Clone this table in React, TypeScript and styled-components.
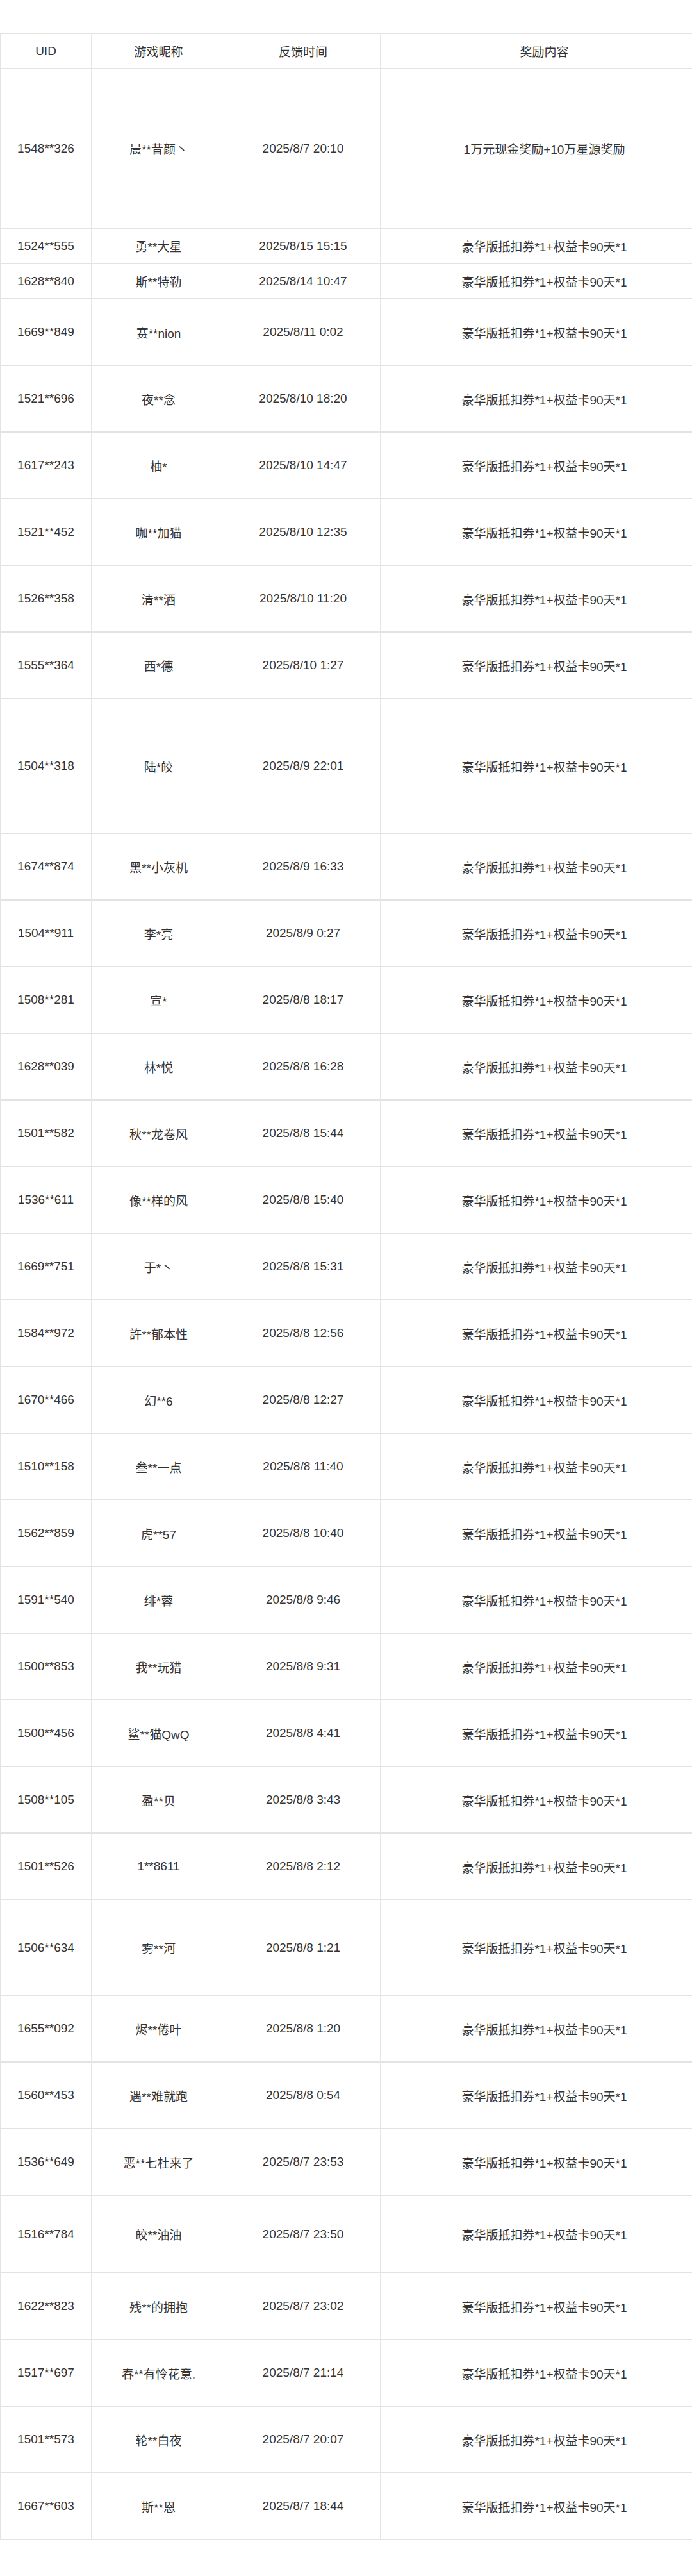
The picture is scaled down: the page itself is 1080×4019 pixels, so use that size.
import React from "react";
import styled, { createGlobalStyle } from "styled-components";

const GlobalStyle = createGlobalStyle`
  html, body {
    margin: 0;
    padding: 0;
    background: #ffffff;
  }
`;

const Page = styled.div`
  padding-top: 51px;
  padding-bottom: 57px;
`;

const RewardTable = styled.table`
  border-collapse: separate;
  border-spacing: 0;
  table-layout: fixed;
  width: 1106px;
  border-top: 2px solid #e3e3e3;
  border-left: 1px solid #e3e3e3;
  font-family: "Liberation Sans", "Noto Sans CJK SC", sans-serif;
  font-size: 19px;
  color: #333333;
`;

const Col = styled.col<{ $w: number }>`
  width: ${(p) => p.$w}px;
`;

const Row = styled.tr<{ $h: number }>`
  & > td,
  & > th {
    height: ${(p) => p.$h}px;
  }
`;

const HeadCell = styled.th`
  box-sizing: border-box;
  padding: 0 4px;
  font-weight: normal;
  text-align: center;
  vertical-align: middle;
  border-right: 1px solid #e6e6e6;
  border-bottom: 2px solid #e3e3e3;
  white-space: nowrap;
`;

const Cell = styled.td`
  box-sizing: border-box;
  padding: 0 4px;
  text-align: center;
  vertical-align: middle;
  border-right: 1px solid #e6e6e6;
  border-bottom: 2px solid #e3e3e3;
  white-space: nowrap;
`;

type Entry = {
  uid: string;
  name: string;
  time: string;
  reward?: string;
  h?: number;
};

const NORMAL = "豪华版抵扣券*1+权益卡90天*1";

const rows: Entry[] = [
  { uid: "1548**326", name: "晨**昔颜丶", time: "2025/8/7 20:10", reward: "1万元现金奖励+10万星源奖励", h: 249 },
  { uid: "1524**555", name: "勇**大星", time: "2025/8/15 15:15", h: 55 },
  { uid: "1628**840", name: "斯**特勒", time: "2025/8/14 10:47", h: 55 },
  { uid: "1669**849", name: "赛**nion", time: "2025/8/11 0:02" },
  { uid: "1521**696", name: "夜**念", time: "2025/8/10 18:20" },
  { uid: "1617**243", name: "柚*", time: "2025/8/10 14:47" },
  { uid: "1521**452", name: "咖**加猫", time: "2025/8/10 12:35" },
  { uid: "1526**358", name: "清**酒", time: "2025/8/10 11:20" },
  { uid: "1555**364", name: "西*德", time: "2025/8/10 1:27" },
  { uid: "1504**318", name: "陆*皎", time: "2025/8/9 22:01", h: 210 },
  { uid: "1674**874", name: "黑**小灰机", time: "2025/8/9 16:33" },
  { uid: "1504**911", name: "李*亮", time: "2025/8/9 0:27" },
  { uid: "1508**281", name: "宣*", time: "2025/8/8 18:17" },
  { uid: "1628**039", name: "林*悦", time: "2025/8/8 16:28" },
  { uid: "1501**582", name: "秋**龙卷风", time: "2025/8/8 15:44" },
  { uid: "1536**611", name: "像**样的风", time: "2025/8/8 15:40" },
  { uid: "1669**751", name: "于*丶", time: "2025/8/8 15:31" },
  { uid: "1584**972", name: "許**郁本性", time: "2025/8/8 12:56" },
  { uid: "1670**466", name: "幻**6", time: "2025/8/8 12:27" },
  { uid: "1510**158", name: "叁**一点", time: "2025/8/8 11:40" },
  { uid: "1562**859", name: "虎**57", time: "2025/8/8 10:40" },
  { uid: "1591**540", name: "绯*蓉", time: "2025/8/8 9:46" },
  { uid: "1500**853", name: "我**玩猎", time: "2025/8/8 9:31" },
  { uid: "1500**456", name: "鲨**猫QwQ", time: "2025/8/8 4:41" },
  { uid: "1508**105", name: "盈**贝", time: "2025/8/8 3:43" },
  { uid: "1501**526", name: "1**8611", time: "2025/8/8 2:12" },
  { uid: "1506**634", name: "雾**河", time: "2025/8/8 1:21", h: 149 },
  { uid: "1655**092", name: "烬**倦叶", time: "2025/8/8 1:20" },
  { uid: "1560**453", name: "遇**难就跑", time: "2025/8/8 0:54" },
  { uid: "1536**649", name: "恶**七杜来了", time: "2025/8/7 23:53" },
  { uid: "1516**784", name: "皎**油油", time: "2025/8/7 23:50", h: 121 },
  { uid: "1622**823", name: "残**的拥抱", time: "2025/8/7 23:02" },
  { uid: "1517**697", name: "春**有怜花意.", time: "2025/8/7 21:14" },
  { uid: "1501**573", name: "轮**白夜", time: "2025/8/7 20:07" },
  { uid: "1667**603", name: "斯**恩", time: "2025/8/7 18:44" },
];

const App = () => {
  return (
    <Page>
      <GlobalStyle />
      <RewardTable>
        <colgroup>
          <Col $w={142} />
          <Col $w={210} />
          <Col $w={241} />
          <Col $w={512} />
        </colgroup>
        <thead>
          <Row $h={55}>
            <HeadCell>UID</HeadCell>
            <HeadCell>游戏昵称</HeadCell>
            <HeadCell>反馈时间</HeadCell>
            <HeadCell>奖励内容</HeadCell>
          </Row>
        </thead>
        <tbody>
          {rows.map((r) => (
            <Row key={r.uid + r.time} $h={r.h ?? 104}>
              <Cell>{r.uid}</Cell>
              <Cell>{r.name}</Cell>
              <Cell>{r.time}</Cell>
              <Cell>{r.reward ?? NORMAL}</Cell>
            </Row>
          ))}
        </tbody>
      </RewardTable>
    </Page>
  );
};

export default App;
